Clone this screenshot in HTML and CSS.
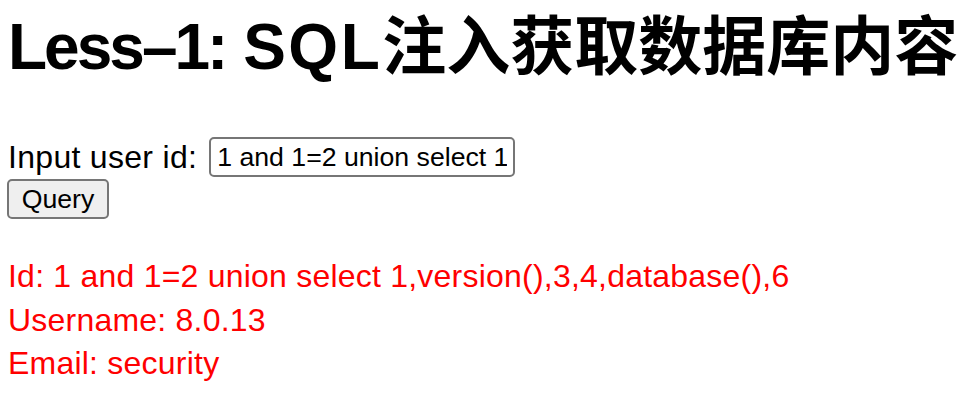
FILE: index.html
```html
<!DOCTYPE html>
<html lang="zh-CN">
<head>
<meta charset="utf-8">
<title>Less-1</title>
<link rel="stylesheet" href="styles.css">
</head>
<body>
<h1 class="title"><span class="title-pre">Less–1:</span> <span class="title-sql">SQL</span>注入获取数据库内容</h1>
<form class="query-form">
  <div class="row">
    <label class="label" for="uid">Input user id:</label>
    <input class="field" id="uid" type="text" value="1 and 1=2 union select 1,version(),3,4,database(),6">
  </div>
  <button class="btn" type="button">Query</button>
</form>
<div class="result">
  <div class="line">Id: 1 and 1=2 union select 1,version(),3,4,database(),6</div>
  <div class="line">Username: 8.0.13</div>
  <div class="line">Email: security</div>
</div>
</body>
</html>
```
FILE: styles.css
```css
html, body {
  margin: 0;
  padding: 0;
  background: #fff;
}
body {
  padding: 0 8px;
  font-family: "Liberation Sans", Arial, "Noto Sans CJK SC", sans-serif;
  font-size: 32px;
  color: #000;
}
.title {
  font-family: "Liberation Sans", Arial, "Noto Sans CJK SC", sans-serif;
  font-size: 64px;
  font-weight: bold;
  margin: 11px 0 0;
  line-height: 73px;
  white-space: nowrap;
}
.title-pre {
  letter-spacing: -3px;
}
.title-sql {
  letter-spacing: 2.5px;
}
.query-form {
  margin-top: 52px;
}
.row {
  display: flex;
  align-items: center;
  gap: 12px;
  height: 42px;
}
.label {
  line-height: 37px;
  letter-spacing: 0.3px;
}
.field {
  box-sizing: border-box;
  width: 306px;
  height: 40px;
  padding: 2px 6px;
  border: 2px solid #767676;
  border-radius: 5px;
  font-family: "Liberation Sans", Arial, sans-serif;
  font-size: 26.67px;
  color: #000;
  background: #fff;
  outline: none;
}
.btn {
  box-sizing: border-box;
  display: block;
  margin-top: 1px;
  margin-left: -1px;
  width: 102px;
  height: 40px;
  padding: 0 12px;
  border: 2px solid #767676;
  border-radius: 5px;
  background: #efefef;
  font-family: "Liberation Sans", Arial, sans-serif;
  font-size: 26.67px;
  color: #000;
}
.result {
  margin-top: 36px;
  color: #ff0000;
  letter-spacing: 0.22px;
}
.line {
  line-height: 43.5px;
}
```
